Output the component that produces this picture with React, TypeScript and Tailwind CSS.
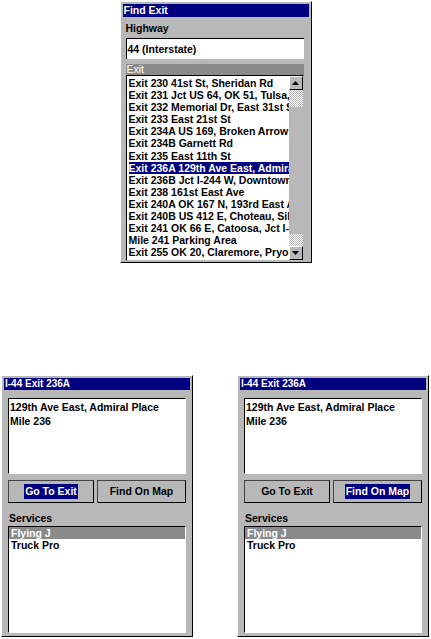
import React from 'react';

const font = "font-['Liberation_Sans',Arial,sans-serif] font-bold text-[10.5px]";

const exits = [
  'Exit 230 41st St, Sheridan Rd',
  'Exit 231 Jct US 64, OK 51, Tulsa, Muskogee',
  'Exit 232 Memorial Dr, East 31st St',
  'Exit 233 East 21st St',
  'Exit 234A US 169, Broken Arrow',
  'Exit 234B Garnett Rd',
  'Exit 235 East 11th St',
  'Exit 236A 129th Ave East, Admiral Place',
  'Exit 236B Jct I-244 W, Downtown',
  'Exit 238 161st East Ave',
  'Exit 240A OK 167 N, 193rd East Ave',
  'Exit 240B US 412 E, Choteau, Siloam Springs',
  'Exit 241 OK 66 E, Catoosa, Jct I-44',
  'Mile 241 Parking Area',
  'Exit 255 OK 20, Claremore, Pryor',
];

const Arrow = ({ down }: { down?: boolean }) => (
  <div className="h-[14px] w-[14px] bg-[#b8b8b8] border border-t-white border-l-white border-b-black border-r-black flex items-center justify-center">
    <svg width="7" height="4" viewBox="0 0 7 4">
      <polygon points={down ? '0,0 7,0 3.5,4' : '0,4 7,4 3.5,0'} fill="#000" />
    </svg>
  </div>
);

const dither = 'bg-[repeating-conic-gradient(#b8b8b8_0_25%,#ffffff_0_50%)] bg-[length:2px_2px]';

function FindExit() {
  return (
    <div className={`w-[192px] h-[262px] bg-[#b8b8b8] border border-black border-t-white border-l-white p-[2px] flex flex-col ${font}`}>
      <div className="h-[13px] bg-[#000080] text-white leading-[13px] pl-[1px]">Find Exit</div>
      <div className="pl-[3px] pr-[5px] flex flex-col">
        <div className="mt-[4px] h-[14px] leading-[14px]">Highway</div>
        <div className="mt-[3px] h-[21px] bg-white border-t border-l border-black leading-[20px] pl-[1px]">44 (Interstate)</div>
        <div className="mt-[5px] h-[11px] bg-[#8a8a8a] text-white leading-[11px] pl-[1px] font-normal">Exit</div>
        <div className="h-[186px] bg-white border-t border-l border-black border-r border-b border-r-[#b8b8b8] border-b-[#b8b8b8] flex overflow-hidden">
          <div className="flex-1 min-w-0 pl-[2px] pt-[1px] overflow-hidden">
            {exits.map((e) => (
              <div
                key={e}
                className={`h-[12.1px] leading-[12px] whitespace-nowrap ${e.startsWith('Exit 236A') ? 'bg-[#000080] text-white' : 'text-black'}`}
              >
                {e}
              </div>
            ))}
          </div>
          <div className="w-[14px] flex flex-col">
            <Arrow />
            <div className={`h-[17px] ${dither}`} />
            <div className="h-[127px] bg-[#b8b8b8]" />
            <div className={`flex-1 ${dither}`} />
            <Arrow down />
          </div>
        </div>
      </div>
    </div>
  );
}

function ExitInfo({ focus }: { focus: 'go' | 'map' }) {
  const label = (t: string, on: boolean) => (
    <span className={on ? 'bg-[#000080] text-white px-[1px]' : 'text-black'}>{t}</span>
  );
  return (
    <div className={`w-[192px] h-[262px] bg-[#b8b8b8] border border-black border-t-white border-l-white p-[2px] flex flex-col ${font}`}>
      <div className="h-[12px] bg-[#000080] text-white leading-[12px] pl-[1px] text-[10px]">I-44 Exit 236A</div>
      <div className="px-[4px] flex flex-col">
        <div className="mt-[8px] h-[76px] bg-white border-t border-l border-black border-r border-b border-r-white border-b-white pl-[1px] pt-[1px] leading-[14px]">
          <div>129th Ave East, Admiral Place</div>
          <div>Mile 236</div>
        </div>
        <div className="mt-[6px] flex gap-[3px] h-[23px]">
          <div className="w-[86px] border border-[#444] border-b-black border-r-black flex items-center justify-center">
            {label('Go To Exit', focus === 'go')}
          </div>
          <div className="flex-1 border border-[#444] border-b-black border-r-black flex items-center justify-center">
            {label('Find On Map', focus === 'map')}
          </div>
        </div>
        <div className="mt-[8px] h-[14px] leading-[14px] pl-[1px]">Services</div>
        <div className="mt-[1px] h-[107px] bg-white border-t border-l border-black border-r border-b border-r-white border-b-white">
          <div className="h-[12px] bg-[#8a8a8a] text-white leading-[12px] pl-[2px]">Flying J</div>
          <div className="h-[12px] leading-[12px] pl-[2px]">Truck Pro</div>
        </div>
      </div>
    </div>
  );
}

export default function App() {
  return (
    <div className="w-[431px] h-[639px] bg-white flex flex-col">
      <div className="pt-[1px] flex justify-center">
        <FindExit />
      </div>
      <div className="mt-[112px] flex pl-[1px] gap-[44px]">
        <ExitInfo focus="go" />
        <ExitInfo focus="map" />
      </div>
    </div>
  );
}
